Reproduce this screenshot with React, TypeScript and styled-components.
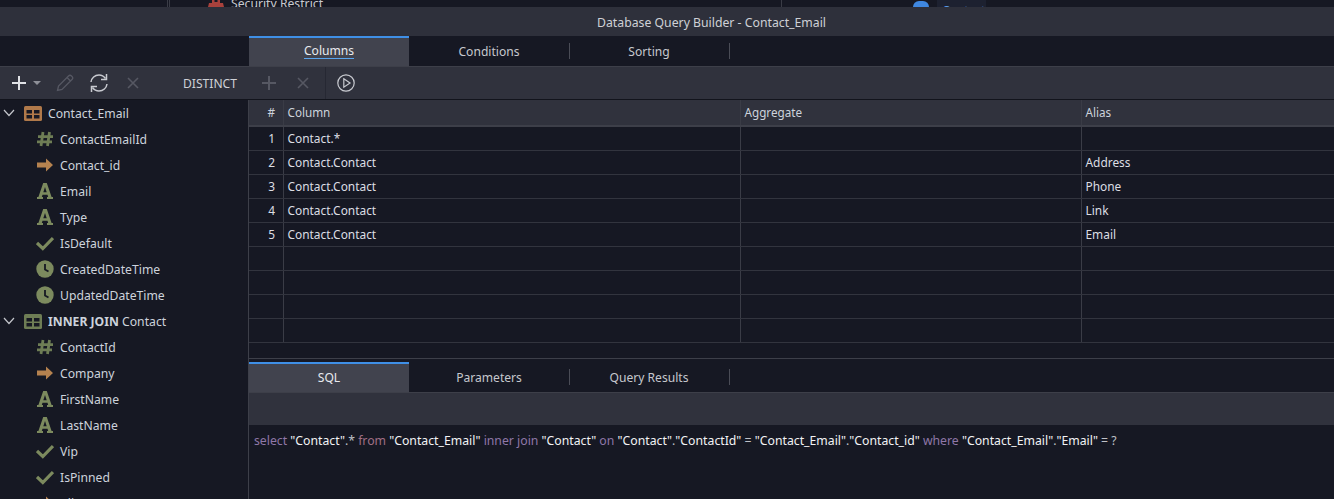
import styled, { createGlobalStyle } from "styled-components";

const GlobalStyle = createGlobalStyle`
  html, body {
    margin: 0;
    padding: 0;
    background: #161823;
    overflow: hidden;
  }
  body {
    font-family: "Noto Sans", "Open Sans", sans-serif;
    font-size: 12px;
    color: #d4d6dc;
  }
`;

const treeIcons: Record<string, React.ReactNode> = {
  hash: (
    <svg width="18" height="18" viewBox="0 0 18 18">
      <path d="M7 2 L5 16 M13.5 2 L11.5 16 M2 6.6 H17 M1 11.8 H16" stroke="#6e7d55" strokeWidth="2.8" fill="none" />
    </svg>
  ),
  arrow: (
    <svg width="18" height="18" viewBox="0 0 18 18">
      <path d="M1 6.5 H10 V2.5 L17 9 L10 15.5 V11.5 H1 Z" fill="#b5824f" />
    </svg>
  ),
  text: (
    <svg width="18" height="18" viewBox="0 0 18 18">
      <path
        d="M7.2 1 H10.8 L15.6 15 H17 V17 H11 V15 H12.2 L11.5 12.8 H6.5 L5.8 15 H7 V17 H1 V15 H2.4 Z M7.3 10.3 H10.7 L9 5 Z"
        fill="#7c8a5e"
        fillRule="evenodd"
      />
    </svg>
  ),
  check: (
    <svg width="18" height="18" viewBox="0 0 18 18">
      <path d="M1 9 L6.8 14.5 L17 4" stroke="#7c8a5e" strokeWidth="3.2" fill="none" />
    </svg>
  ),
  clock: (
    <svg width="18" height="18" viewBox="0 0 18 18">
      <circle cx="9" cy="9" r="8.7" fill="#7c8a5e" />
      <path d="M9 4 V9.5 L12.5 11.5" stroke="#161823" strokeWidth="1.8" fill="none" />
    </svg>
  ),
};

const TableIcon = ({ color }: { color: string }) => (
  <svg width="18" height="15" viewBox="0 0 18 15">
    <rect width="18" height="15" rx="1.5" fill={color} />
    <rect x="2.5" y="4" width="5.5" height="3.5" fill="#161823" />
    <rect x="10" y="4" width="5.5" height="3.5" fill="#161823" />
    <rect x="2.5" y="9" width="5.5" height="3.5" fill="#161823" />
    <rect x="10" y="9" width="5.5" height="3.5" fill="#161823" />
  </svg>
);

const Chevron = () => (
  <svg width="12" height="8" viewBox="0 0 12 8">
    <path d="M1 1 L6 6.5 L11 1" stroke="#c4c6cc" strokeWidth="1.2" fill="none" />
  </svg>
);

const PlusIcon = ({ color }: { color: string }) => (
  <svg width="16" height="16" viewBox="0 0 16 16">
    <path d="M8 1 V15 M1 8 H15" stroke={color} strokeWidth="2" fill="none" />
  </svg>
);

const CloseIcon = () => (
  <svg width="14" height="14" viewBox="0 0 14 14">
    <path d="M2 2 L12 12 M12 2 L2 12" stroke="#565863" strokeWidth="1.6" fill="none" />
  </svg>
);

const PencilIcon = () => (
  <svg width="18" height="18" viewBox="0 0 18 18">
    <path d="M1.5 16.5 L2.5 12 L12.5 2 C13.5 1 14.5 1 15.5 2 L16 2.5 C17 3.5 17 4.5 16 5.5 L6 15.5 Z M11 3.5 L14.5 7" stroke="#565863" strokeWidth="1.3" fill="none" />
  </svg>
);

const RefreshIcon = () => (
  <svg width="20" height="20" viewBox="0 0 20 20">
    <path d="M2 9 C2.5 5 5.8 2 10 2 C12.8 2 15 3.4 16.5 5.5 M18 11 C17.5 15 14.2 18 10 18 C7.2 18 5 16.6 3.5 14.5" stroke="#c8cad0" strokeWidth="1.5" fill="none" />
    <path d="M17.5 1 V6.5 H12 M2.5 19 V13.5 H8" stroke="#c8cad0" strokeWidth="1.5" fill="none" />
  </svg>
);

const PlayIcon = () => (
  <svg width="18" height="18" viewBox="0 0 18 18">
    <circle cx="9" cy="9" r="8.2" stroke="#c8cad0" strokeWidth="1.2" fill="none" />
    <path d="M6.8 4.8 L13 9 L6.8 13.2 Z" stroke="#c8cad0" strokeWidth="1.2" fill="none" />
  </svg>
);

const emailFields = [
  ["hash", "ContactEmailId"],
  ["arrow", "Contact_id"],
  ["text", "Email"],
  ["text", "Type"],
  ["check", "IsDefault"],
  ["clock", "CreatedDateTime"],
  ["clock", "UpdatedDateTime"],
];

const contactFields = [
  ["hash", "ContactId"],
  ["arrow", "Company"],
  ["text", "FirstName"],
  ["text", "LastName"],
  ["check", "Vip"],
  ["check", "IsPinned"],
  ["arrow", "Alias"],
];

const rows = [
  ["1", "Contact.*", ""],
  ["2", "Contact.Contact", "Address"],
  ["3", "Contact.Contact", "Phone"],
  ["4", "Contact.Contact", "Link"],
  ["5", "Contact.Contact", "Email"],
  ["", "", ""],
  ["", "", ""],
  ["", "", ""],
  ["", "", ""],
];

export default function App() {
  return (
    <Page>
      <GlobalStyle />
      <BehindStrip>
        <BehindLeft>
          <svg width="16" height="7" viewBox="0 0 16 7">
            <path d="M4 0 H6.5 V2 H9.5 V0 H12 V3 H15 L16 7 H0 L1 3 H4 Z" fill="#a8413c" />
          </svg>
          <BehindText>Security Restrict</BehindText>
        </BehindLeft>
        <BehindRight>
          <BehindBadge />
          <BehindLabel>Contact</BehindLabel>
        </BehindRight>
      </BehindStrip>
      <TitleBar>Database Query Builder - Contact_Email</TitleBar>
      <TabRow>
        <Tab $active><TabLabel $underlined>Columns</TabLabel></Tab>
        <Tab>Conditions</Tab>
        <Tab>Sorting</Tab>
      </TabRow>
      <Toolbar>
        <ToolSlot $gap={0}><PlusIcon color="#e0e2e6" /></ToolSlot>
        <ToolSlot $gap={6}><Caret /></ToolSlot>
        <ToolSlot $gap={15}><PencilIcon /></ToolSlot>
        <ToolSlot $gap={15}><RefreshIcon /></ToolSlot>
        <ToolSlot $gap={17}><CloseIcon /></ToolSlot>
        <Distinct>DISTINCT</Distinct>
        <ToolSlot $gap={24}><PlusIcon color="#565863" /></ToolSlot>
        <ToolSlot $gap={19}><CloseIcon /></ToolSlot>
        <ToolDivider />
        <ToolSlot $gap={11}><PlayIcon /></ToolSlot>
      </Toolbar>
      <Body>
        <Sidebar>
          <TreeHead>
            <Chevron />
            <TableIcon color="#b0794a" />
            <TreeHeadLabel>Contact_Email</TreeHeadLabel>
          </TreeHead>
          {emailFields.map(([icon, name]) => (
            <TreeRow key={name}>
              {treeIcons[icon]}
              <span>{name}</span>
            </TreeRow>
          ))}
          <TreeHead>
            <Chevron />
            <TableIcon color="#6e7d55" />
            <TreeHeadLabel><b>INNER JOIN</b> Contact</TreeHeadLabel>
          </TreeHead>
          {contactFields.map(([icon, name]) => (
            <TreeRow key={name}>
              {treeIcons[icon]}
              <span>{name}</span>
            </TreeRow>
          ))}
        </Sidebar>
        <Main>
          <GridArea>
            <HeadRow>
              <NumCell>#</NumCell>
              <Cell>Column</Cell>
              <Cell>Aggregate</Cell>
              <Cell>Alias</Cell>
            </HeadRow>
            {rows.map((row, i) => (
              <DataRow key={i}>
                <NumCell>{row[0]}</NumCell>
                <Cell>{row[1]}</Cell>
                <Cell />
                <Cell>{row[2]}</Cell>
              </DataRow>
            ))}
          </GridArea>
          <TabRowLower>
            <Tab $active>SQL</Tab>
            <Tab>Parameters</Tab>
            <Tab>Query Results</Tab>
          </TabRowLower>
          <SqlToolbar />
          <SqlText>
            <Kw>select</Kw> <Str>"Contact"</Str>.* <Kw $red>from</Kw> <Str>"Contact_Email"</Str>{" "}
            <Kw>inner join</Kw> <Str>"Contact"</Str> <Kw>on</Kw> <Str>"Contact"</Str>.<Str>"ContactId"</Str> ={" "}
            <Str>"Contact_Email"</Str>.<Str>"Contact_id"</Str> <Kw>where</Kw> <Str>"Contact_Email"</Str>.
            <Str>"Email"</Str> = ?
          </SqlText>
        </Main>
      </Body>
    </Page>
  );
}

const Page = styled.div`
  width: 1334px;
  height: 499px;
  display: flex;
  flex-direction: column;
  overflow: hidden;
`;

const BehindStrip = styled.div`
  height: 7px;
  flex: none;
  display: flex;
  overflow: hidden;
  background: #161823;
`;

const BehindLeft = styled.div`
  margin-left: 167px;
  width: 615px;
  height: 7px;
  padding-left: 38px;
  box-sizing: border-box;
  display: flex;
  align-items: flex-start;
  gap: 7px;
  border-left: 3px double #3a3c46;
  border-right: 1px solid #3a3c46;
`;

const BehindText = styled.span`
  font-size: 12.2px;
  line-height: 10px;
  color: #c8cad0;
  margin-top: -1px;
`;

const BehindRight = styled.div`
  margin-left: 131px;
  height: 7px;
  display: flex;
  gap: 8px;
`;

const BehindBadge = styled.div`
  width: 16px;
  height: 6px;
  margin-top: 1px;
  background: #3f87e0;
  border-radius: 6px 6px 0 0;
`;

const BehindLabel = styled.div`
  width: 49px;
  background: #1d2130;
  color: #5b9be8;
  font-size: 12px;
  line-height: 22px;
  padding: 0 5px;
  box-sizing: border-box;
  overflow: hidden;
`;

const TitleBar = styled.div`
  height: 29px;
  flex: none;
  box-sizing: border-box;
  padding: 1px 0 0 89px;
  background: #2e303b;
  display: flex;
  align-items: center;
  justify-content: center;
  font-size: 12.25px;
  color: #cfd1d6;
`;

const TabRow = styled.div`
  height: 30px;
  flex: none;
  display: flex;
  padding-left: 249px;
  border-bottom: 1px solid #3d3f49;
`;

const TabRowLower = styled(TabRow)`
  padding-left: 0;
  margin-top: 3px;
`;

const Tab = styled.div<{ $active?: boolean }>`
  width: 160px;
  display: flex;
  align-items: center;
  justify-content: center;
  box-sizing: border-box;
  padding-bottom: 2px;
  font-size: 12.1px;
  color: ${(p) => (p.$active ? "#e8eaee" : "#c6c8ce")};
  background: ${(p) => (p.$active ? "#41434e" : "transparent")};
  border-top: 2px solid ${(p) => (p.$active ? "#3f8fe6" : "transparent")};
  position: relative;
  ${(p) =>
    !p.$active &&
    `&::after {
      content: "";
      position: absolute;
      right: -1px;
      top: 5px;
      bottom: 7px;
      width: 1px;
      background: #4a4c56;
    }`}
`;

const TabLabel = styled.span<{ $underlined?: boolean }>`
  border-bottom: 1px solid ${(p) => (p.$underlined ? "#5aa5ef" : "transparent")};
  line-height: 15px;
`;

const Toolbar = styled.div`
  height: 32px;
  flex: none;
  display: flex;
  padding-left: 11px;
  background: #30323d;
  border-bottom: 1px solid #12141c;
`;

const ToolSlot = styled.div<{ $gap: number }>`
  margin-left: ${(p) => p.$gap}px;
  display: flex;
  align-items: center;
`;

const Caret = styled.div`
  width: 0;
  height: 0;
  border-left: 4px solid transparent;
  border-right: 4px solid transparent;
  border-top: 4px solid #8e9098;
`;

const Distinct = styled.div`
  margin-left: 43px;
  width: 54px;
  display: flex;
  align-items: center;
  font-size: 12.1px;
  color: #cfd1d6;
`;

const ToolDivider = styled.div`
  margin-left: 15px;
  width: 1px;
  background: #262833;
`;

const Body = styled.div`
  flex: 1;
  min-height: 0;
  display: flex;
`;

const Sidebar = styled.div`
  width: 249px;
  flex: none;
  overflow: hidden;
  box-sizing: border-box;
  border-right: 1px solid #3d3f49;
`;

const TreeHead = styled.div`
  height: 26px;
  display: flex;
  align-items: center;
  padding-left: 3px;
  font-size: 12.2px;
  color: #cdd3dc;
  gap: 9px;

  b {
    font-weight: 700;
  }
`;

const TreeHeadLabel = styled.span`
  margin-left: -3px;
`;

const TreeRow = styled.div`
  height: 26px;
  display: flex;
  align-items: center;
  padding-left: 36px;
  gap: 6px;
  font-size: 12.2px;
  color: #cdd3dc;
`;

const Main = styled.div`
  flex: 1;
  min-width: 0;
  display: flex;
  flex-direction: column;
`;

const GridArea = styled.div`
  height: 258px;
  flex: none;
  overflow: hidden;
  border-bottom: 1px solid #3d3f49;
`;

const gridCols = "35px 457px 341px 1fr";

const HeadRow = styled.div`
  display: grid;
  grid-template-columns: ${gridCols};
  height: 27px;
  box-sizing: border-box;
  background: #30323d;
  border-bottom: 2px solid #3d3f49;
  font-size: 11.7px;
  color: #cdd3dc;
`;

const DataRow = styled.div`
  display: grid;
  grid-template-columns: ${gridCols};
  height: 24px;
  box-sizing: border-box;
  border-bottom: 1px solid #32343e;
  font-size: 11.9px;
  color: #dcdee3;
`;

const Cell = styled.div`
  display: flex;
  align-items: center;
  padding: 0 0 1px 3.5px;
  border-right: 1px solid #3a3c46;
  white-space: nowrap;

  &:last-child {
    border-right: none;
  }
`;

const NumCell = styled(Cell)`
  justify-content: flex-end;
  padding: 0 8px 1px 0;
`;

const SqlToolbar = styled.div`
  height: 32px;
  flex: none;
  background: #30323d;
`;

const SqlText = styled.div`
  flex: 1;
  padding: 8px 0 0 5px;
  font-size: 12.25px;
  line-height: 16px;
  color: #bfc1c7;
  white-space: nowrap;
`;

const Str = styled.span`
  color: #f2f3f5;
`;

const Kw = styled.span<{ $red?: boolean }>`
  color: ${(p) => (p.$red ? "#a06f85" : "#8f77a8")};
`;
